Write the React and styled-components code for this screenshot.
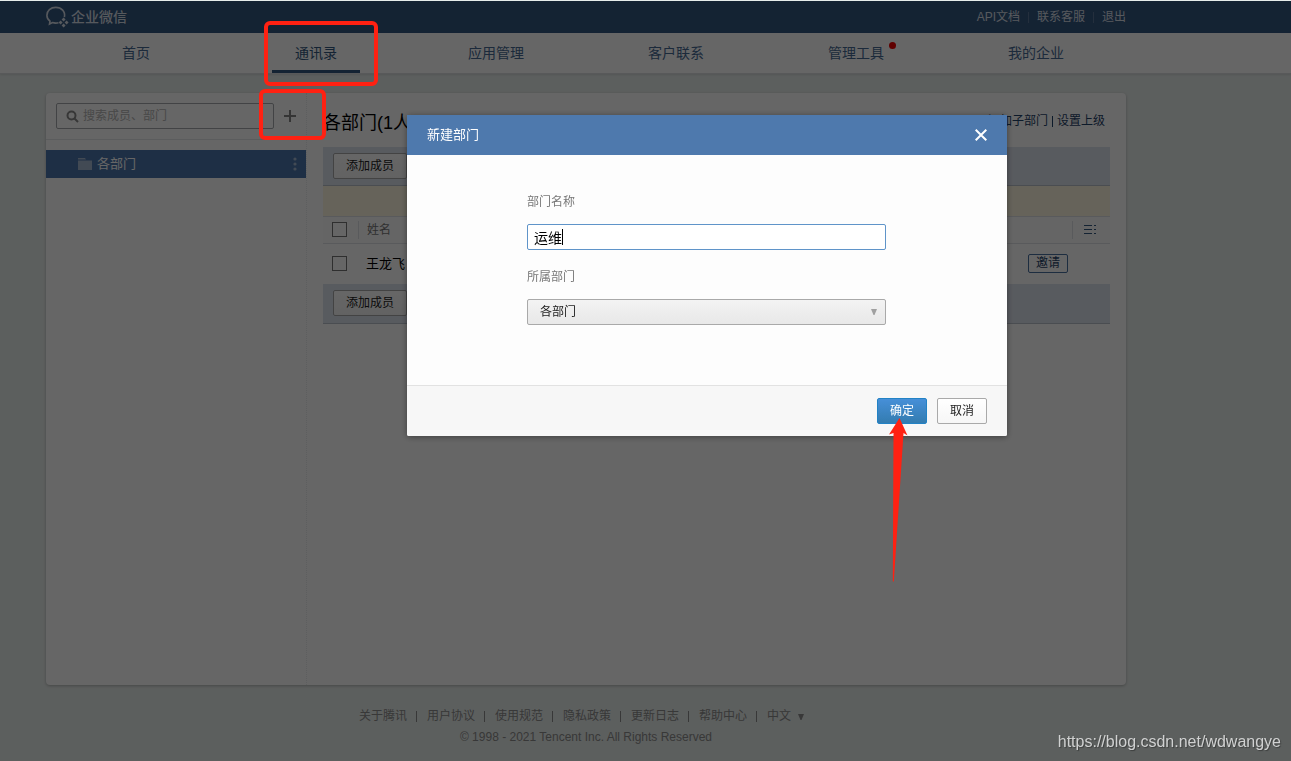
import React from "react";
import styled, { createGlobalStyle } from "styled-components";

const sans = `"Liberation Sans", "Noto Sans CJK SC", sans-serif`;

const GlobalStyle = createGlobalStyle`
  * {
    box-sizing: border-box;
  }
  body {
    margin: 0;
    background: #e7edeb;
    color: #000;
    font: 12px/20px ${sans};
  }
  a {
    color: inherit;
    text-decoration: none;
  }
  button,
  input,
  select {
    font: inherit;
    color: inherit;
    margin: 0;
  }
`;

const Page = styled.div`
  border-top: 1px solid #e7edeb;
  display: flex;
  flex-direction: column;
  min-height: 100vh;
`;

const Container = styled.div`
  max-width: 1080px;
  width: 100%;
  margin: 0 auto;
  display: flex;
  align-items: center;
`;

const TopBar = styled.header`
  background: #345780;
  padding-right: 119px;
  color: #fff;
`;

const TopBarInner = styled(Container)`
  height: 32px;
  justify-content: space-between;
`;

const Brand = styled.a`
  display: flex;
  align-items: center;
  gap: 2px;
  font-size: 14px;
  font-weight: 500;
  color: #d8dfe8;
`;

const TopLinks = styled.nav`
  display: flex;
  align-items: center;
  gap: 8px;
  color: #d8dfe8;
`;

const Divider = styled.i`
  width: 1px;
  height: 11px;
  background: ${(props) => props.$color};
`;

const NavBar = styled.nav`
  background: #fff;
  padding-right: 119px;
  border-bottom: 1px solid #dcdfe0;
  box-shadow: 0 1px 2px rgba(0, 0, 0, 0.1);
`;

const NavItem = styled.a`
  flex: 1;
  height: 40px;
  display: flex;
  justify-content: center;
  color: ${(props) => (props.$active ? "#345780" : "#466994")};
  font-size: 14px;
  line-height: 40px;

  span {
    position: relative;
    padding: 0 23px;
    border-bottom: 3px solid ${(props) => (props.$active ? "#345780" : "transparent")};
  }
`;

const Dot = styled.b`
  position: absolute;
  top: 9px;
  right: 11px;
  width: 7px;
  height: 7px;
  border-radius: 50%;
  background: #f00000;
`;

const Body = styled.div`
  padding: 19px 119px 0 0;
`;

const Card = styled(Container)`
  align-items: stretch;
  min-height: 592px;
  background: #fff;
  border-radius: 4px;
  box-shadow: 0 1px 3px rgba(0, 0, 0, 0.25);
`;

const Sidebar = styled.aside`
  width: 261px;
  border-right: 1px dotted #e9ebee;
`;

const SearchRow = styled.div`
  display: flex;
  align-items: center;
  gap: 10px;
  padding: 10px;
  border-bottom: 1px solid #e4e6e9;
`;

const SearchBox = styled.label`
  display: flex;
  align-items: center;
  gap: 4px;
  width: 218px;
  height: 26px;
  padding-left: 9px;
  border: 1px solid #a6a9ad;
  border-radius: 2px;

  input {
    flex: 1;
    min-width: 0;
    border: 0;
    padding: 0;
    outline: 0;
    background: none;
  }
  input::placeholder {
    color: #b4b4b4;
  }
`;

const IconButton = styled.button`
  display: flex;
  padding: 0;
  border: 0;
  background: none;
`;

const Department = styled.div`
  display: flex;
  align-items: center;
  gap: 5px;
  height: 28px;
  margin-top: 10px;
  padding: 0 9px 0 32px;
  background: #4c76ad;
  color: #fff;
  font-size: 13px;

  span {
    flex: 1;
  }
`;

const Content = styled.main`
  flex: 1;
  min-width: 0;
  padding: 17px 16px 0;
`;

const ContentHead = styled.div`
  display: flex;
  justify-content: space-between;
  padding-right: 5px;
  height: 37px;
`;

const Title = styled.h1`
  margin: 0;
  font-size: 18px;
  font-weight: 400;
  line-height: 26px;
`;

const HeadLinks = styled.div`
  display: flex;
  align-items: center;
  height: 22px;
  gap: 4px;
  color: #1f4269;
`;

const Toolbar = styled.div`
  height: ${(props) => (props.$bottom ? 40 : 39)}px;
  padding: 6px 10px;
  background: #dde3ee;
  border-bottom: 1px solid #b9c0cb;
`;

const Button = styled.button`
  height: 26px;
  min-width: 50px;
  padding: 0 12px;
  border: 1px solid ${(props) => (props.$primary ? "#2282c5" : "#a9a9a9")};
  border-radius: 2px;
  background: ${(props) =>
    props.$primary
      ? "linear-gradient(#468fd8, #337cb0)"
      : "linear-gradient(#fff, #f6f6f6)"};
  color: ${(props) => (props.$primary ? "#fff" : "#222")};
  line-height: 24px;
  white-space: nowrap;
`;

const Notice = styled.div`
  height: 31px;
  background: #fff8e2;
  border-bottom: 1px solid #dfe1e5;
`;

const MemberTable = styled.table`
  width: 100%;
  border-collapse: collapse;
  table-layout: fixed;

  th,
  td {
    padding: 0 8px;
    text-align: left;
    font-weight: 400;
  }
  th {
    height: 26px;
    background: #fcfcfc;
    border-bottom: 1px solid #dfe1e5;
    color: #777;
  }
  td {
    height: 41px;
    font-size: 13px;
  }
`;

const CheckCell = styled.col`
  width: 35px;
`;

const ActionCell = styled.col`
  width: 52px;
`;

const SettingCell = styled.col`
  width: 38px;
`;

const HeadCell = styled.div`
  margin-left: -8px;
  padding-left: ${(props) => props.$indent}px;
  height: 18px;
  border-left: 1px solid #dfe1e5;
  display: flex;
  align-items: center;
`;

const Checkbox = styled.input.attrs({ type: "checkbox" })`
  appearance: none;
  display: block;
  width: 15px;
  height: 15px;
  margin: 0 0 0 1px;
  border: 1px solid #767676;
  background: #fff;
`;

const Invite = styled.button`
  display: block;
  height: 19px;
  padding: 0 7px;
  border: 1px solid #4a70a0;
  border-radius: 2px;
  background: none;
  color: #1f4269;
  font-size: 12px;
  line-height: 17px;
`;

const Footer = styled.footer`
  padding: 21px 119px 0 0;
  color: #8c8c8c;
  text-align: center;
  line-height: 21px;
`;

const FooterLinks = styled.div`
  display: flex;
  align-items: center;
  justify-content: center;
  gap: 9px;
  padding-right: 9px;

  i {
    margin-right: 1px;
  }
`;

const Language = styled.button`
  display: flex;
  align-items: center;
  gap: 7px;
  padding: 0;
  border: 0;
  background: none;
`;

const Overlay = styled.div`
  position: fixed;
  inset: 1px 0 0;
  display: flex;
  align-items: flex-start;
  justify-content: center;
  padding: 114px 0 0 123px;
  background: rgba(0, 0, 0, 0.6);
`;

const Dialog = styled.section`
  width: 600px;
  background: #fdfdfd;
  box-shadow: 0 1px 6px rgba(0, 0, 0, 0.4);
  border-radius: 2px;
`;

const DialogHead = styled.header`
  display: flex;
  align-items: center;
  justify-content: space-between;
  height: 40px;
  padding: 0 20px;
  background: #4e79ad;
  color: #fff;

  h2 {
    margin: 0;
    font-size: 13px;
    font-weight: 400;
  }
`;

const Form = styled.form`
  height: 230px;
  padding: 37px 121px 0 120px;
`;

const Field = styled.div`
  margin-bottom: 17px;

  label {
    display: block;
    margin-bottom: 12px;
    color: #787878;
  }
`;

const InputBox = styled.div`
  position: relative;
`;

const TextInput = styled.input`
  display: block;
  width: 100%;
  height: 26px;
  padding: 0 6px;
  border: 1px solid #5f94c9;
  border-radius: 2px;
  outline: 0;
  background: #fff;
  font-size: 14px;
  caret-color: transparent;
`;

const Cursor = styled.i`
  position: absolute;
  left: 35px;
  top: 5px;
  width: 1px;
  height: 16px;
  background: #000;
`;

const SelectBox = styled.div`
  position: relative;

  select {
    appearance: none;
    display: block;
    width: 100%;
    height: 26px;
    padding: 0 12px;
    border: 1px solid #a9a9a9;
    border-radius: 2px;
    background: linear-gradient(#f3f3f3, #e8e8e8);
    color: #222;
  }
  svg {
    position: absolute;
    right: 9px;
    top: 10px;
    pointer-events: none;
  }
`;

const DialogFoot = styled.footer`
  display: flex;
  justify-content: flex-end;
  gap: 10px;
  padding: 12px 20px;
  border-top: 1px solid #e2e2e2;
  background: #f7f7f7;
  border-radius: 0 0 2px 2px;
`;

const Highlight = styled.div`
  position: absolute;
  left: ${(props) => props.$x}px;
  top: ${(props) => props.$y}px;
  width: ${(props) => props.$w}px;
  height: ${(props) => props.$h}px;
  border: 4px solid #ff2112;
  border-radius: 6px;
`;

const Arrow = styled.svg`
  position: absolute;
  left: 888px;
  top: 418px;
`;

const Watermark = styled.div`
  position: fixed;
  right: 10px;
  bottom: 8px;
  color: #d0d1d1;
  font-size: 16px;
  line-height: 22px;
  text-shadow: 1px 1px 1px rgba(0, 0, 0, 0.35);
`;

const LogoIcon = () => (
  <svg width="23" height="22" viewBox="0 0 23 22" fill="none" stroke="#d8dfe8" strokeWidth="1.6">
    <path d="M18.4 11.2C19.6 5.4 15.4 1.4 9.8 1.4C4.6 1.4.9 4.8.9 9.2c0 2.600 1.200 4.600 3.100 6L3.500 18l3-1.400c2 .6 4.200.6 6 .1" />
    <path d="M17.600 11.500l2 2-2 2-2-2zM20.600 14.500l2 2-2 2-2-2zM17.600 17.500l2 2-2 2-2-2zM14.600 14.500l2 2-2 2-2-2z" fill="#d8dfe8" stroke="none" />
  </svg>
);

const SearchIcon = () => (
  <svg width="13" height="13" viewBox="0 0 13 13" fill="none" stroke="#8a8a8a" strokeWidth="2">
    <circle cx="5.500" cy="5.500" r="4" />
    <path d="M8.500 8.500L12 12" />
  </svg>
);

const PlusIcon = () => (
  <svg width="12" height="12" viewBox="0 0 12 12" stroke="#858585" strokeWidth="2">
    <path d="M6 0v12M0 6h12" />
  </svg>
);

const FolderIcon = () => (
  <svg width="14" height="12" viewBox="0 0 14 12" fill="#a5b8d2">
    <path d="M0 0h7l1 1.500H0zM0 2.500h14V12H0z" />
  </svg>
);

const MoreIcon = () => (
  <svg width="4" height="14" viewBox="0 0 4 14" fill="#a5b8d2">
    <circle cx="2" cy="2" r="1.600" />
    <circle cx="2" cy="7" r="1.600" />
    <circle cx="2" cy="12" r="1.600" />
  </svg>
);

const ListIcon = () => (
  <svg width="12" height="9" viewBox="0 0 12 9" stroke="#345780">
    <path d="M0 .5h8M10 .5h2M0 4.500h8M10 4.500h2M0 8.500h8M10 8.500h2" />
  </svg>
);

const CloseIcon = () => (
  <svg width="12" height="12" viewBox="0 0 12 12" stroke="#fff" strokeWidth="2">
    <path d="M.7.7l10.600 10.600M11.300.7L.7 11.300" />
  </svg>
);

const CaretIcon = ({ color }) => (
  <svg width="6" height="6" viewBox="0 0 6 6" fill={color}>
    <path d="M0 0h6L3.500 6h-1z" />
  </svg>
);

const navItems = ["首页", "通讯录", "应用管理", "客户联系", "管理工具", "我的企业"];
const footerItems = ["关于腾讯", "用户协议", "使用规范", "隐私政策", "更新日志", "帮助中心"];

const App = () => {
  return (
    <>
      <GlobalStyle />
      <Page>
        <TopBar>
          <TopBarInner>
            <Brand href="#home">
              <LogoIcon />
              企业微信
            </Brand>
            <TopLinks>
              <a href="#api">API文档</a>
              <Divider $color="#5a7699" />
              <a href="#service">联系客服</a>
              <Divider $color="#5a7699" />
              <a href="#logout">退出</a>
            </TopLinks>
          </TopBarInner>
        </TopBar>
        <NavBar>
          <Container>
            {navItems.map((item) => (
              <NavItem href="#nav" key={item} $active={item === "通讯录"}>
                <span>
                  {item}
                  {item === "管理工具" && <Dot />}
                </span>
              </NavItem>
            ))}
          </Container>
        </NavBar>
        <Body>
          <Card>
            <Sidebar>
              <SearchRow>
                <SearchBox>
                  <SearchIcon />
                  <input aria-label="搜索" placeholder="搜索成员、部门" />
                </SearchBox>
                <IconButton aria-label="添加">
                  <PlusIcon />
                </IconButton>
              </SearchRow>
              <Department>
                <FolderIcon />
                <span>各部门</span>
                <MoreIcon />
              </Department>
            </Sidebar>
            <Content>
              <ContentHead>
                <Title>各部门(1人)</Title>
                <HeadLinks>
                  <a href="#add">添加子部门</a>
                  <Divider $color="#1f4269" />
                  <a href="#parent">设置上级</a>
                </HeadLinks>
              </ContentHead>
              <Toolbar>
                <Button>添加成员</Button>
              </Toolbar>
              <Notice />
              <MemberTable>
                <colgroup>
                  <CheckCell />
                  <col />
                  <ActionCell />
                  <SettingCell />
                </colgroup>
                <thead>
                  <tr>
                    <th>
                      <Checkbox aria-label="全选" />
                    </th>
                    <th>
                      <HeadCell $indent={8}>姓名</HeadCell>
                    </th>
                    <th />
                    <th>
                      <HeadCell $indent={11}>
                        <ListIcon />
                      </HeadCell>
                    </th>
                  </tr>
                </thead>
                <tbody>
                  <tr>
                    <td>
                      <Checkbox aria-label="王龙飞" />
                    </td>
                    <td>王龙飞</td>
                    <td colSpan="2">
                      <Invite>邀请</Invite>
                    </td>
                  </tr>
                </tbody>
              </MemberTable>
              <Toolbar $bottom>
                <Button>添加成员</Button>
              </Toolbar>
            </Content>
          </Card>
        </Body>
        <Footer>
          <FooterLinks>
            {footerItems.map((item) => (
              <React.Fragment key={item}>
                <a href="#footer">{item}</a>
                <Divider $color="#8c8c8c" />
              </React.Fragment>
            ))}
            <Language>
              中文
              <CaretIcon color="#8c8c8c" />
            </Language>
          </FooterLinks>
          <div>© 1998 - 2021 Tencent Inc. All Rights Reserved</div>
        </Footer>
      </Page>

      <Overlay>
        <Dialog role="dialog" aria-labelledby="dialog-title">
          <DialogHead>
            <h2 id="dialog-title">新建部门</h2>
            <IconButton aria-label="关闭">
              <CloseIcon />
            </IconButton>
          </DialogHead>
          <Form>
            <Field>
              <label htmlFor="name">部门名称</label>
              <InputBox>
                <TextInput id="name" defaultValue="运维" autoFocus />
                <Cursor />
              </InputBox>
            </Field>
            <Field>
              <label htmlFor="parent">所属部门</label>
              <SelectBox>
                <select id="parent">
                  <option>各部门</option>
                </select>
                <CaretIcon color="#a0a0a0" />
              </SelectBox>
            </Field>
          </Form>
          <DialogFoot>
            <Button $primary>确定</Button>
            <Button>取消</Button>
          </DialogFoot>
        </Dialog>
      </Overlay>

      <Highlight $x={264} $y={21} $w={114} $h={65} />
      <Highlight $x={259} $y={89} $w={67} $h={51} />
      <Arrow width="20" height="165" viewBox="0 0 20 165" fill="#ff2112">
        <path d="M11.500 0L19.500 17.500L15.500 15L5.800 163.500H4.800L5.500 15L1 16.500z" />
      </Arrow>
      <Watermark>https://blog.csdn.net/wdwangye</Watermark>
    </>
  );
};

export default App;
